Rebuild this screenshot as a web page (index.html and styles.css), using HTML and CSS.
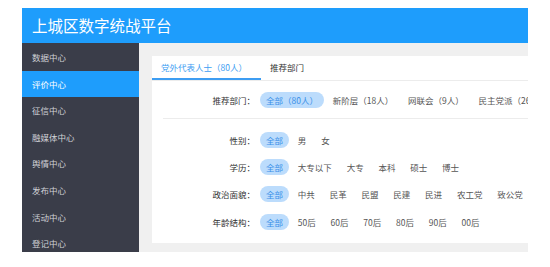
FILE: index.html
```html
<!DOCTYPE html>
<html lang="zh-CN">
<head>
    <meta charset="UTF-8">
    <title>上城区数字统战平台</title>
    <link rel="stylesheet" href="styles.css">
</head>
<body>
    <div class="app">
        <div class="header">上城区数字统战平台</div>

        <div class="layout">
            <div class="sidebar">
                <div class="navItem">数据中心</div>
                <div class="navItem active">评价中心</div>
                <div class="navItem">征信中心</div>
                <div class="navItem">融媒体中心</div>
                <div class="navItem">舆情中心</div>
                <div class="navItem">发布中心</div>
                <div class="navItem">活动中心</div>
                <div class="navItem">登记中心</div>
            </div>

            <div class="main">
                <div class="card">
                    <div class="tabs">
                        <div class="tab active">党外代表人士（80人）</div>
                        <div class="tab">推荐部门</div>
                    </div>

                    <div class="filterRow deptRow">
                        <div class="label">推荐部门：</div>
                        <div class="options">
                            <span class="option selected">全部（80人）</span>
                            <span class="option">新阶层（18人）</span>
                            <span class="option">网联会（9人）</span>
                            <span class="option">民主党派（26人）</span>
                        </div>
                    </div>

                    <div class="divider"></div>

                    <div class="filterRow">
                        <div class="label">性别：</div>
                        <div class="options">
                            <span class="option selected">全部</span>
                            <span class="option">男</span>
                            <span class="option">女</span>
                        </div>
                    </div>

                    <div class="filterRow">
                        <div class="label">学历：</div>
                        <div class="options">
                            <span class="option selected">全部</span>
                            <span class="option">大专以下</span>
                            <span class="option">大专</span>
                            <span class="option">本科</span>
                            <span class="option">硕士</span>
                            <span class="option">博士</span>
                        </div>
                    </div>

                    <div class="filterRow">
                        <div class="label">政治面貌：</div>
                        <div class="options">
                            <span class="option selected">全部</span>
                            <span class="option">中共</span>
                            <span class="option">民革</span>
                            <span class="option">民盟</span>
                            <span class="option">民建</span>
                            <span class="option">民进</span>
                            <span class="option">农工党</span>
                            <span class="option">致公党</span>
                        </div>
                    </div>

                    <div class="filterRow">
                        <div class="label">年龄结构：</div>
                        <div class="options">
                            <span class="option selected">全部</span>
                            <span class="option">50后</span>
                            <span class="option">60后</span>
                            <span class="option">70后</span>
                            <span class="option">80后</span>
                            <span class="option">90后</span>
                            <span class="option">00后</span>
                        </div>
                    </div>
                </div>
            </div>
        </div>
    </div>
</body>
</html>
```

FILE: styles.css
```css
body {
    margin: 0;
    padding: 0;
    background-color: #ffffff;
    font-family: "Noto Sans CJK SC", "Noto Sans", sans-serif;
}

.app {
    margin: 8px 0 0 22px;
    width: 506px;
    height: 244px;
    display: flex;
    flex-direction: column;
    overflow: hidden;
}

.header {
    height: 35px;
    flex-shrink: 0;
    background-color: #1e9dfc;
    color: #ffffff;
    font-size: 15.5px;
    line-height: 35px;
    padding-left: 10px;
}

.layout {
    flex: 1;
    display: flex;
    min-height: 0;
}

.sidebar {
    width: 117px;
    flex-shrink: 0;
    background-color: #3a3d49;
    padding-top: 1px;
    overflow: hidden;
}

.navItem {
    height: 26.6px;
    line-height: 26.6px;
    padding-left: 10px;
    font-size: 8.5px;
    color: #cfd0d6;
}

.navItem.active {
    background-color: #1e9dfc;
    color: #ffffff;
}

.main {
    flex: 1;
    background-color: #f0f0f0;
    padding: 13px 0 8px 13px;
    overflow: hidden;
}

.card {
    width: 420px;
    height: 187px;
    background-color: #ffffff;
    font-size: 8.5px;
    color: #333333;
}

.tabs {
    display: flex;
    height: 24px;
    border-bottom: 1px solid #ececec;
}

.tab {
    padding: 0 11px 0 9px;
    line-height: 23px;
    color: #333333;
}

.tab.active {
    color: #3d9df2;
    padding-right: 14px;
    border-bottom: 2px solid #3d9df2;
}

.filterRow {
    display: flex;
    align-items: center;
    height: 27.3px;
    white-space: nowrap;
}

.deptRow {
    height: 22px;
    margin-top: 8px;
}

.label {
    width: 103px;
    flex-shrink: 0;
    text-align: right;
    color: #333333;
}

.options {
    display: flex;
    align-items: center;
    gap: 2.8px;
    margin-left: 5px;
}

.option {
    padding: 0 6px;
    height: 16px;
    line-height: 16px;
    border-radius: 8px;
    color: #555555;
}

.option.selected {
    background-color: #bcdcfc;
    color: #3a90e8;
}

.divider {
    height: 1px;
    background-color: #ececec;
    margin: 7px 0 7px 11px;
}
```
